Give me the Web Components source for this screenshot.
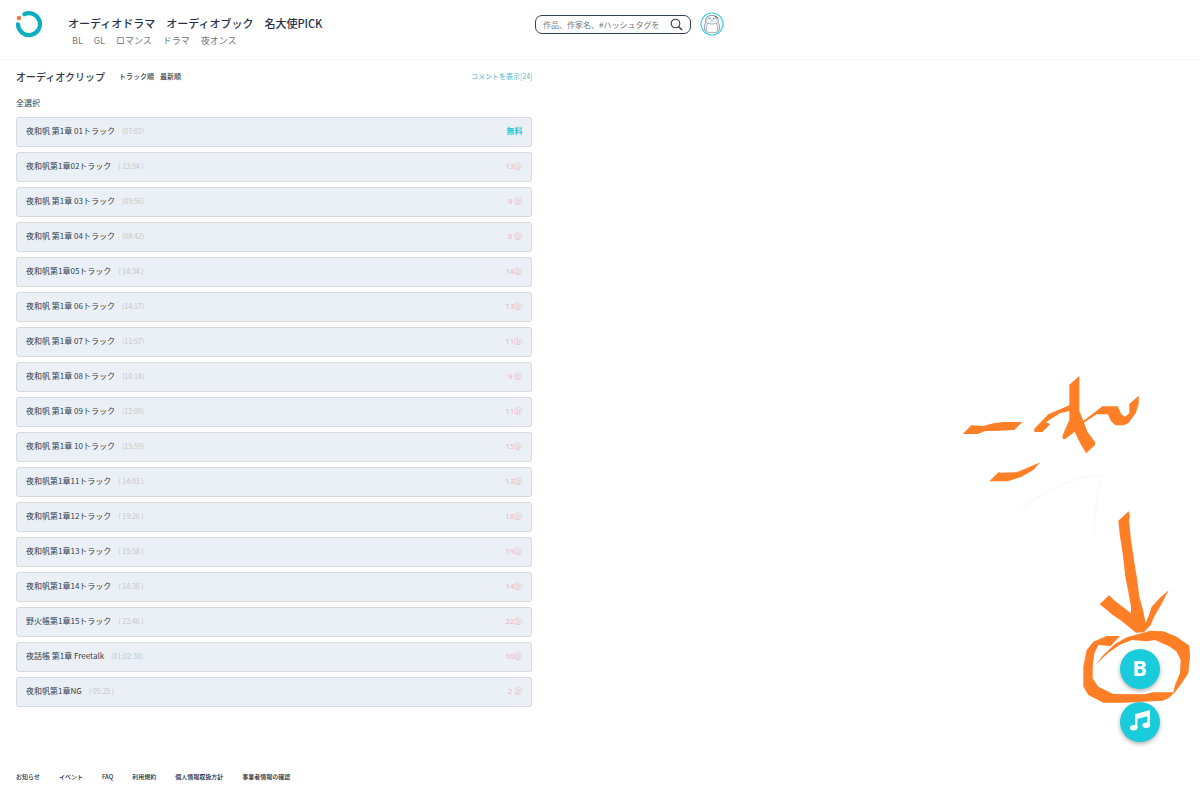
<!DOCTYPE html>
<html lang="ja">
<head>
<meta charset="utf-8">
<meta name="viewport" content="width=device-width, initial-scale=1">
<title>オーディオクリップ</title>
<style>
    body {
        margin: 0;
        min-height: 100vh;
        display: flex;
        flex-direction: column;
        background: #fff;
        color: #333d4b;
        font-family: "Noto Sans CJK JP", sans-serif;
        font-size: 8px;
    }
</style>
</head>
<body>
<site-header>
    <nav-link slot="main" size="large">オーディオドラマ</nav-link>
    <nav-link slot="main" size="large">オーディオブック</nav-link>
    <nav-link slot="main" size="large">名大使PICK</nav-link>
    <nav-link slot="sub">BL</nav-link>
    <nav-link slot="sub">GL</nav-link>
    <nav-link slot="sub">ロマンス</nav-link>
    <nav-link slot="sub">ドラマ</nav-link>
    <nav-link slot="sub">夜オンス</nav-link>
    <search-box slot="tools"></search-box>
    <user-avatar slot="tools"></user-avatar>
</site-header>

<clip-list></clip-list>

<site-footer>
    <nav-link size="small">お知らせ</nav-link>
    <nav-link size="small">イベント</nav-link>
    <nav-link size="small">FAQ</nav-link>
    <nav-link size="small">利用規約</nav-link>
    <nav-link size="small">個人情報取扱方針</nav-link>
    <nav-link size="small">事業者情報の確認</nav-link>
</site-footer>

<floating-actions></floating-actions>
<pen-marks></pen-marks>

<script>
// Attach an open shadow root filled from a template string
function render(element, html) {
    const template = document.createElement('template');
    template.innerHTML = html;
    element.attachShadow({ mode: 'open' });
    element.shadowRoot.appendChild(template.content.cloneNode(true));
}

// Link used in the header and in the footer
class NavLink extends HTMLElement {
    constructor() {
        super();
        render(this, `
        <style>
            :host { display: block; font-size: 9px; line-height: 14px; color: #6f7880; white-space: nowrap; }
            :host([size="large"]) { font-size: 11px; line-height: 18px; font-weight: 500; color: #26324a; }
            :host([size="small"]) { font-size: 6px; line-height: 10px; font-weight: 500; color: #1c2733; }
            a { color: inherit; text-decoration: none; }
        </style>
        <a href="#"><slot></slot></a>
        `);
    }
}

class SiteHeader extends HTMLElement {
    constructor() {
        super();
        render(this, `
        <style>
            :host { display: block; border-bottom: 1px solid #f5f5f5; }
            header { display: grid; grid-template-columns: 4fr 5fr; padding: 10px 16px; }
            .left { display: flex; gap: 26px; }
            .logo { width: 26px; height: 28px; }
            .logo svg { display: block; }
            nav div { display: flex; gap: 11px; padding-top: 4px; }
            nav div + div { padding: 2px 0 1px 4px; }
            .tools { display: flex; align-items: flex-start; gap: 9px; padding-top: 2px; }
        </style>
        <header>
            <div class="left">
                <a class="logo" href="#" aria-label="ホーム">
                    <svg width="26" height="28" viewBox="0 0 26 28">
                        <path d="M8.4 4.1 A11 11 0 1 1 2 14.4" fill="none" stroke="#0cafbf" stroke-width="4.2" stroke-linecap="round"/>
                        <circle cx="3" cy="8" r="2.2" fill="#f4743b"/>
                    </svg>
                </a>
                <nav>
                    <div><slot name="main"></slot></div>
                    <div><slot name="sub"></slot></div>
                </nav>
            </div>
            <div class="tools"><slot name="tools"></slot></div>
        </header>
        `);
    }
}

class SearchBox extends HTMLElement {
    constructor() {
        super();
        render(this, `
        <style>
            :host { display: block; padding-top: 3px; }
            form {
                box-sizing: border-box;
                display: flex;
                align-items: center;
                width: 156px;
                height: 19px;
                padding: 0 7px;
                border: 1px solid #33405a;
                border-radius: 7px;
            }
            input {
                flex: 1;
                min-width: 0;
                padding: 0;
                border: 0;
                outline: 0;
                background: none;
                font: inherit;
                color: inherit;
            }
            input::placeholder { color: #777; opacity: 1; }
            button { display: flex; padding: 0; border: 0; background: none; }
        </style>
        <form>
            <input type="text" aria-label="検索" placeholder="作品、作家名、#ハッシュタグを">
            <button type="button" aria-label="検索する">
                <svg width="13" height="13" viewBox="0 0 13 13" fill="none" stroke="#3b3f48">
                    <circle cx="5.5" cy="5.5" r="4.3" stroke-width="1.1"/>
                    <path d="M8.6 8.6 L12 12" stroke-width="1.5"/>
                </svg>
            </button>
        </form>
        `);
    }
}

class UserAvatar extends HTMLElement {
    constructor() {
        super();
        render(this, `
        <style>
            :host { display: block; }
            button { display: block; padding: 0; border: 0; background: none; }
            svg { display: block; }
        </style>
        <button aria-label="マイページ">
            <svg width="24" height="24" viewBox="0 0 24 24" fill="none">
                <circle cx="12" cy="12" r="11" fill="#fff" stroke="#3fd3e0" stroke-width="1.2"/>
                <path d="M6 19.5 C3.6 16 4 13 6 10.5 C4.5 5.5 8 3.4 12 3.4 C16 3.4 19.5 5.5 18 10.5 C20 13 20.4 16 18 19.5" fill="#f1f6fb" stroke="#8b9299" stroke-width="1"/>
                <path d="M7.5 11 C9 12.4 15 12.4 16.5 11 C18 15 17.5 18 16.8 20.4 H7.2 C6.5 18 6 15 7.5 11Z" fill="#fff" stroke="#8b9299" stroke-width=".7"/>
                <path d="M7 8 L9 5 M17 8 L15.6 5" stroke="#9ccbe8" stroke-width="1.2"/>
                <circle cx="10" cy="6.6" r=".7" fill="#555"/>
                <circle cx="13.6" cy="6.6" r=".7" fill="#555"/>
                <path d="M11 8.3 L12 9 L13 8.3" stroke="#777" stroke-width=".6"/>
                <path d="M15 4.2 L17.6 5.8" stroke="#a3563a" stroke-width="1.2"/>
            </svg>
        </button>
        `);
    }
}

// One row of the list
class TrackRow extends HTMLElement {
    constructor() {
        super();
        render(this, `
        <style>
            :host {
                box-sizing: border-box;
                display: flex;
                align-items: center;
                gap: 7px;
                height: 30px;
                padding: 0 9px 2px;
                border: 1px solid #d8dadd;
                border-radius: 3px;
                background: #ebf0f6;
                line-height: 12px;
                white-space: nowrap;
            }
            .time { font-size: 7px; color: #c0c6cc; }
            .price { margin-left: auto; color: #efb0c6; font-family: "Open Sans", "DejaVu Sans", sans-serif; }
            .price.free { font-family: inherit; font-weight: 700; color: #1fc8d8; }
        </style>
        <span class="title"></span>
        <span class="time"></span>
        <span class="price"></span>
        `);
    }

    set track(track) {
        const root = this.shadowRoot;
        root.querySelector('.title').append(track.title);
        root.querySelector('.time').append(track.time);
        const price = root.querySelector('.price');
        price.append(track.price);
        price.classList.toggle('free', track.price === '無料');
    }
}

const tracks = [
    { title: '夜和帆 第1章 01トラック', time: '(07:02)', price: '無料' },
    { title: '夜和帆第1章02トラック', time: '( 13:54 )', price: '13ⓑ' },
    { title: '夜和帆 第1章 03トラック', time: '(09:56)', price: '9 ⓑ' },
    { title: '夜和帆 第1章 04トラック', time: '(08:42)', price: '8 ⓑ' },
    { title: '夜和帆第1章05トラック', time: '( 14:34 )', price: '14ⓑ' },
    { title: '夜和帆 第1章 06トラック', time: '(14:17)', price: '13ⓑ' },
    { title: '夜和帆 第1章 07トラック', time: '(11:57)', price: '11ⓑ' },
    { title: '夜和帆 第1章 08トラック', time: '(10:14)', price: '9 ⓑ' },
    { title: '夜和帆 第1章 09トラック', time: '(12:09)', price: '11ⓑ' },
    { title: '夜和帆 第1章 10トラック', time: '(15:59)', price: '15ⓑ' },
    { title: '夜和帆第1章11トラック', time: '( 14:03 )', price: '13ⓑ' },
    { title: '夜和帆第1章12トラック', time: '( 19:26 )', price: '18ⓑ' },
    { title: '夜和帆第1章13トラック', time: '( 19:58 )', price: '19ⓑ' },
    { title: '夜和帆第1章14トラック', time: '( 14:38 )', price: '14ⓑ' },
    { title: '野火帳第1章15トラック', time: '( 22:46 )', price: '22ⓑ' },
    { title: '夜話帳 第1章 Freetalk', time: '(01:02:38)', price: '10ⓑ' },
    { title: '夜和帆第1章NG', time: '( 05:25 )', price: '2 ⓑ' }
];

class ClipList extends HTMLElement {
    constructor() {
        super();
        render(this, `
        <style>
            :host { display: block; }
            main { display: grid; grid-template-columns: 4fr 5fr; gap: 6px; padding: 7px 16px; }
            .top { display: flex; align-items: center; height: 18px; }
            h1 { margin: 0 14px 0 0; font-size: 10px; font-weight: 500; }
            button { padding: 0; border: 0; background: none; font: inherit; color: inherit; }
            .sort { margin-right: 6px; font-size: 7px; font-weight: 500; }
            .comments { margin-left: auto; font-size: 7px; color: #45b9d2; }
            .all { display: block; margin: 11px 0 7px; line-height: 14px; }
            .rows { display: flex; flex-direction: column; gap: 5px; }
        </style>
        <main>
            <section>
                <div class="top">
                    <h1>オーディオクリップ</h1>
                    <button class="sort">トラック順</button>
                    <button class="sort">最新順</button>
                    <button class="comments">コメントを表示[24]</button>
                </div>
                <button class="all">全選択</button>
                <div class="rows" role="list"></div>
            </section>
        </main>
        `);

        const rows = this.shadowRoot.querySelector('.rows');
        for (const track of tracks) {
            const row = document.createElement('track-row');
            row.setAttribute('role', 'listitem');
            row.track = track;
            rows.appendChild(row);
        }
    }
}

class SiteFooter extends HTMLElement {
    constructor() {
        super();
        render(this, `
        <style>
            :host { display: block; margin-top: auto; }
            footer { display: flex; gap: 19px; padding: 10px 16px; }
        </style>
        <footer><slot></slot></footer>
        `);
    }
}

class FloatingActions extends HTMLElement {
    constructor() {
        super();
        render(this, `
        <style>
            :host {
                position: fixed;
                right: 40px;
                bottom: 50px;
                display: flex;
                flex-direction: column;
                gap: 13px;
            }
            button {
                display: flex;
                align-items: center;
                justify-content: center;
                width: 40px;
                height: 40px;
                padding: 0 0 4px;
                border: 0;
                border-radius: 50%;
                background: #1acbdb;
                box-shadow: 0 2px 4px rgba(0, 0, 0, .3);
                color: #fff;
                font: 700 22px "Open Sans", sans-serif;
            }
        </style>
        <button>B</button>
        <button aria-label="音楽">
            <svg width="22" height="22" viewBox="0 0 22 22" fill="#fff">
                <path d="M6 5.2 L21 1 V15.8 H18.4 V7.3 L8.4 10 V19 H6Z"/>
                <ellipse cx="4.7" cy="18.8" rx="3.8" ry="2.7"/>
                <ellipse cx="17.3" cy="16.2" rx="3.8" ry="2.7"/>
            </svg>
        </button>
        `);
    }
}

// Hand drawn note and arrow that point at the floating buttons
class PenMarks extends HTMLElement {
    constructor() {
        super();
        render(this, `
        <style>
            :host { position: fixed; right: 0; bottom: 0; pointer-events: none; }
            svg { display: block; }
        </style>
        <svg width="250" height="432" viewBox="0 0 750 1296" fill="#ff7f27" aria-hidden="true">
            <path d="M212 445 L300 390 L345 370 L400 352 L458 346 L444 390 L438 450 L430 520" fill="none" stroke="#fafafa" stroke-width="6"/>
            <path d="M38 222 L64 196 L100 198 L130 190 L160 186 L217 186 L193 210 L130 213 L105 213 L84 222Z"/>
            <path d="M118 364 L147 335 L150 338 L200 337 L240 320 L271 307 L250 330 L215 350 L173 364Z"/>
            <path d="M358 74 L388 48 V152 L400 183 L430 160 L457 139 H503 L514 163 L525 170 L538 160 V132 L566 107 V133 L557 160 L535 190 L520 196 H496 L483 184 L474 163 H440 L402 188 L412 215 L435 246 V255 L408 280 L390 248 L374 215 L345 238 L338 236 V225 L358 180 V153 L330 160 L287 187 L301 192 L277 216 H253 V206 L295 163 L358 136Z"/>
            <g transform="translate(330 420)">
                <path d="M175 62 L206 34 L210 50 L207 60 L213 120 L225 200 L231 235 L238 290 L249 330 L254 355 L257 370 L267 345 L275 320 L300 293 L326 271 L300 320 L285 345 L272 375 L252 397 L228 398 L185 363 L155 343 L138 328 L119 313 L147 286 L165 303 L213 340 L213 320 L205 275 L196 230 L188 160 L180 110Z"/>
                <path d="M108 493 L130 465 L165 432 L200 412 L245 400 L270 392 L310 394 L350 410 L388 437 L390 470 L385 520 L365 550 L345 577 L325 595 L308 602 L190 608 H130 L85 585 L70 560 V500 L80 450 L100 425 L140 408 H180 L152 438 L115 435 L103 460 L98 500 V535 L115 560 L160 582 L255 583 L278 577 H340 L345 555 L360 520 L362 480 L350 455 L330 440 L285 420 L260 424 L215 420 L180 434 L145 458Z"/>
            </g>
        </svg>
        `);
    }
}

// Define the custom elements, rows before the list that creates them
customElements.define('nav-link', NavLink);
customElements.define('site-header', SiteHeader);
customElements.define('search-box', SearchBox);
customElements.define('user-avatar', UserAvatar);
customElements.define('track-row', TrackRow);
customElements.define('clip-list', ClipList);
customElements.define('site-footer', SiteFooter);
customElements.define('floating-actions', FloatingActions);
customElements.define('pen-marks', PenMarks);
</script>
</body>
</html>
